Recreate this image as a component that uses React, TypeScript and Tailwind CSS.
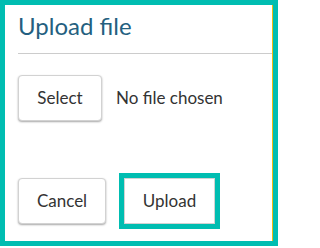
export default function App() {
  return (
    <div className="w-[279px] h-[248px] bg-white font-['Lato',sans-serif]">
      <div className="w-[278px] h-[246px] border-[5px] border-[#00bdb1] bg-white">
        <div className="h-full border-r border-[#f0bb12] flex flex-col">
          <div className="ml-[13px] pt-[7px] pb-[13px] border-b border-[#cccccc]">
            <h1 className="text-[24px] leading-[28px] text-[#245f80]">Upload file</h1>
          </div>

          <div className="ml-[13px] mt-[21px] flex items-center gap-[14px]">
            <button className="w-[84px] h-[46px] rounded-[4px] border border-[#d2d2d2] bg-white text-[17px] leading-[20px] text-[#333] shadow-[0_1px_2px_rgba(0,0,0,0.35)]">
              Select
            </button>
            <span className="text-[17px] leading-[20px] text-[#333]">No file chosen</span>
          </div>

          <div className="ml-[13px] mt-[57px] flex items-center gap-[18px]">
            <button className="w-[88px] h-[46px] rounded-[4px] border border-[#d2d2d2] bg-white text-[17px] leading-[20px] text-[#333] shadow-[0_1px_2px_rgba(0,0,0,0.35)]">
              Cancel
            </button>
            <button className="w-[91px] h-[46px] border border-[#d2d2d2] bg-white text-[17px] leading-[20px] text-[#333] shadow-[0_1px_2px_rgba(0,0,0,0.35)] outline-[5px] outline-solid outline-[#00bdb1]">
              Upload
            </button>
          </div>
        </div>
      </div>
    </div>
  );
}
